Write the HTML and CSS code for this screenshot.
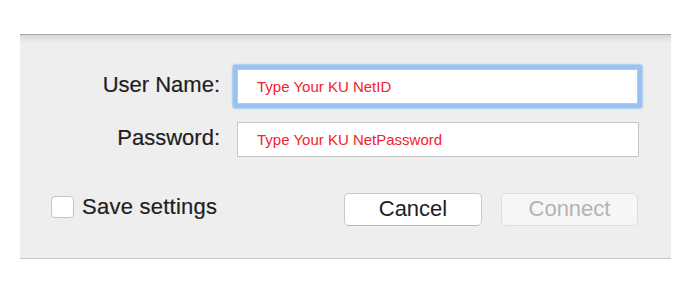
FILE: index.html
```html
<!DOCTYPE html>
<html>
<head>
<meta charset="utf-8">
<link rel="stylesheet" href="styles.css">
</head>
<body>
<div class="panel">
  <div class="fields">
    <label class="label">User Name:</label>
    <div class="input focused">Type Your KU NetID</div>
    <label class="label">Password:</label>
    <div class="input">Type Your KU NetPassword</div>
  </div>
  <div class="actions">
    <div class="check"><span class="box"></span><span class="check-text">Save settings</span></div>
    <div class="buttons">
      <div class="btn">Cancel</div>
      <div class="btn disabled">Connect</div>
    </div>
  </div>
</div>
</body>
</html>
```
FILE: styles.css
```css
html, body {
  margin: 0;
  padding: 0;
  background: #ffffff;
  font-family: "Liberation Sans", Arial, sans-serif;
}
body {
  padding: 34px 20px 0 20px;
}
.panel {
  box-sizing: border-box;
  width: 651px;
  height: 225px;
  background: #eeeeee;
  border-top: 1px solid #a9a9a9;
  border-bottom: 1px solid #c4c4c4;
  background-image: linear-gradient(#d6d6d6, #eeeeee 8px);
  padding: 34px 33px 0 0;
}
.fields {
  display: grid;
  grid-template-columns: 1fr 401px;
  column-gap: 17px;
  row-gap: 18px;
}
.label {
  font-size: 22px;
  color: #1e1e1e;
  text-align: right;
  align-self: center;
  line-height: 24px;
  margin-top: -3px;
  -webkit-text-stroke: 0.2px #1e1e1e;
}
.input {
  box-sizing: border-box;
  height: 35px;
  background: #ffffff;
  border: 1px solid #c6c6c6;
  color: #f2222c;
  font-size: 15px;
  line-height: 33px;
  padding-left: 19px;
}
.input.focused {
  border-color: #b9c9dc;
  box-shadow: 0 0 0 4px #99c2f1, 0 0 1.5px 5px #a9cbf2;
  border-radius: 1px;
}
.input + .label + .input {
  width: 402px;
}
.actions {
  display: flex;
  justify-content: space-between;
  align-items: center;
  margin-top: 36px;
  padding-left: 31px;
}
.check {
  display: flex;
  align-items: center;
  gap: 8px;
  margin-top: -5px;
}
.box {
  box-sizing: border-box;
  width: 23px;
  height: 22px;
  background: #ffffff;
  border: 1px solid #c4c4c4;
  border-radius: 4px;
}
.check-text {
  font-size: 22px;
  letter-spacing: 0.25px;
  color: #1e1e1e;
  line-height: 24px;
  -webkit-text-stroke: 0.2px #1e1e1e;
}
.buttons {
  display: flex;
  gap: 19px;
}
.btn {
  box-sizing: border-box;
  width: 138px;
  height: 33px;
  background: #ffffff;
  border: 1px solid #c9c9c9;
  border-bottom-color: #b8b8b8;
  border-radius: 5px;
  font-size: 22px;
  color: #1e1e1e;
  text-align: center;
  line-height: 30px;
}
.btn.disabled {
  width: 137px;
  background: #f6f6f6;
  border-color: #dedede;
  color: #b3b3b3;
}
```
